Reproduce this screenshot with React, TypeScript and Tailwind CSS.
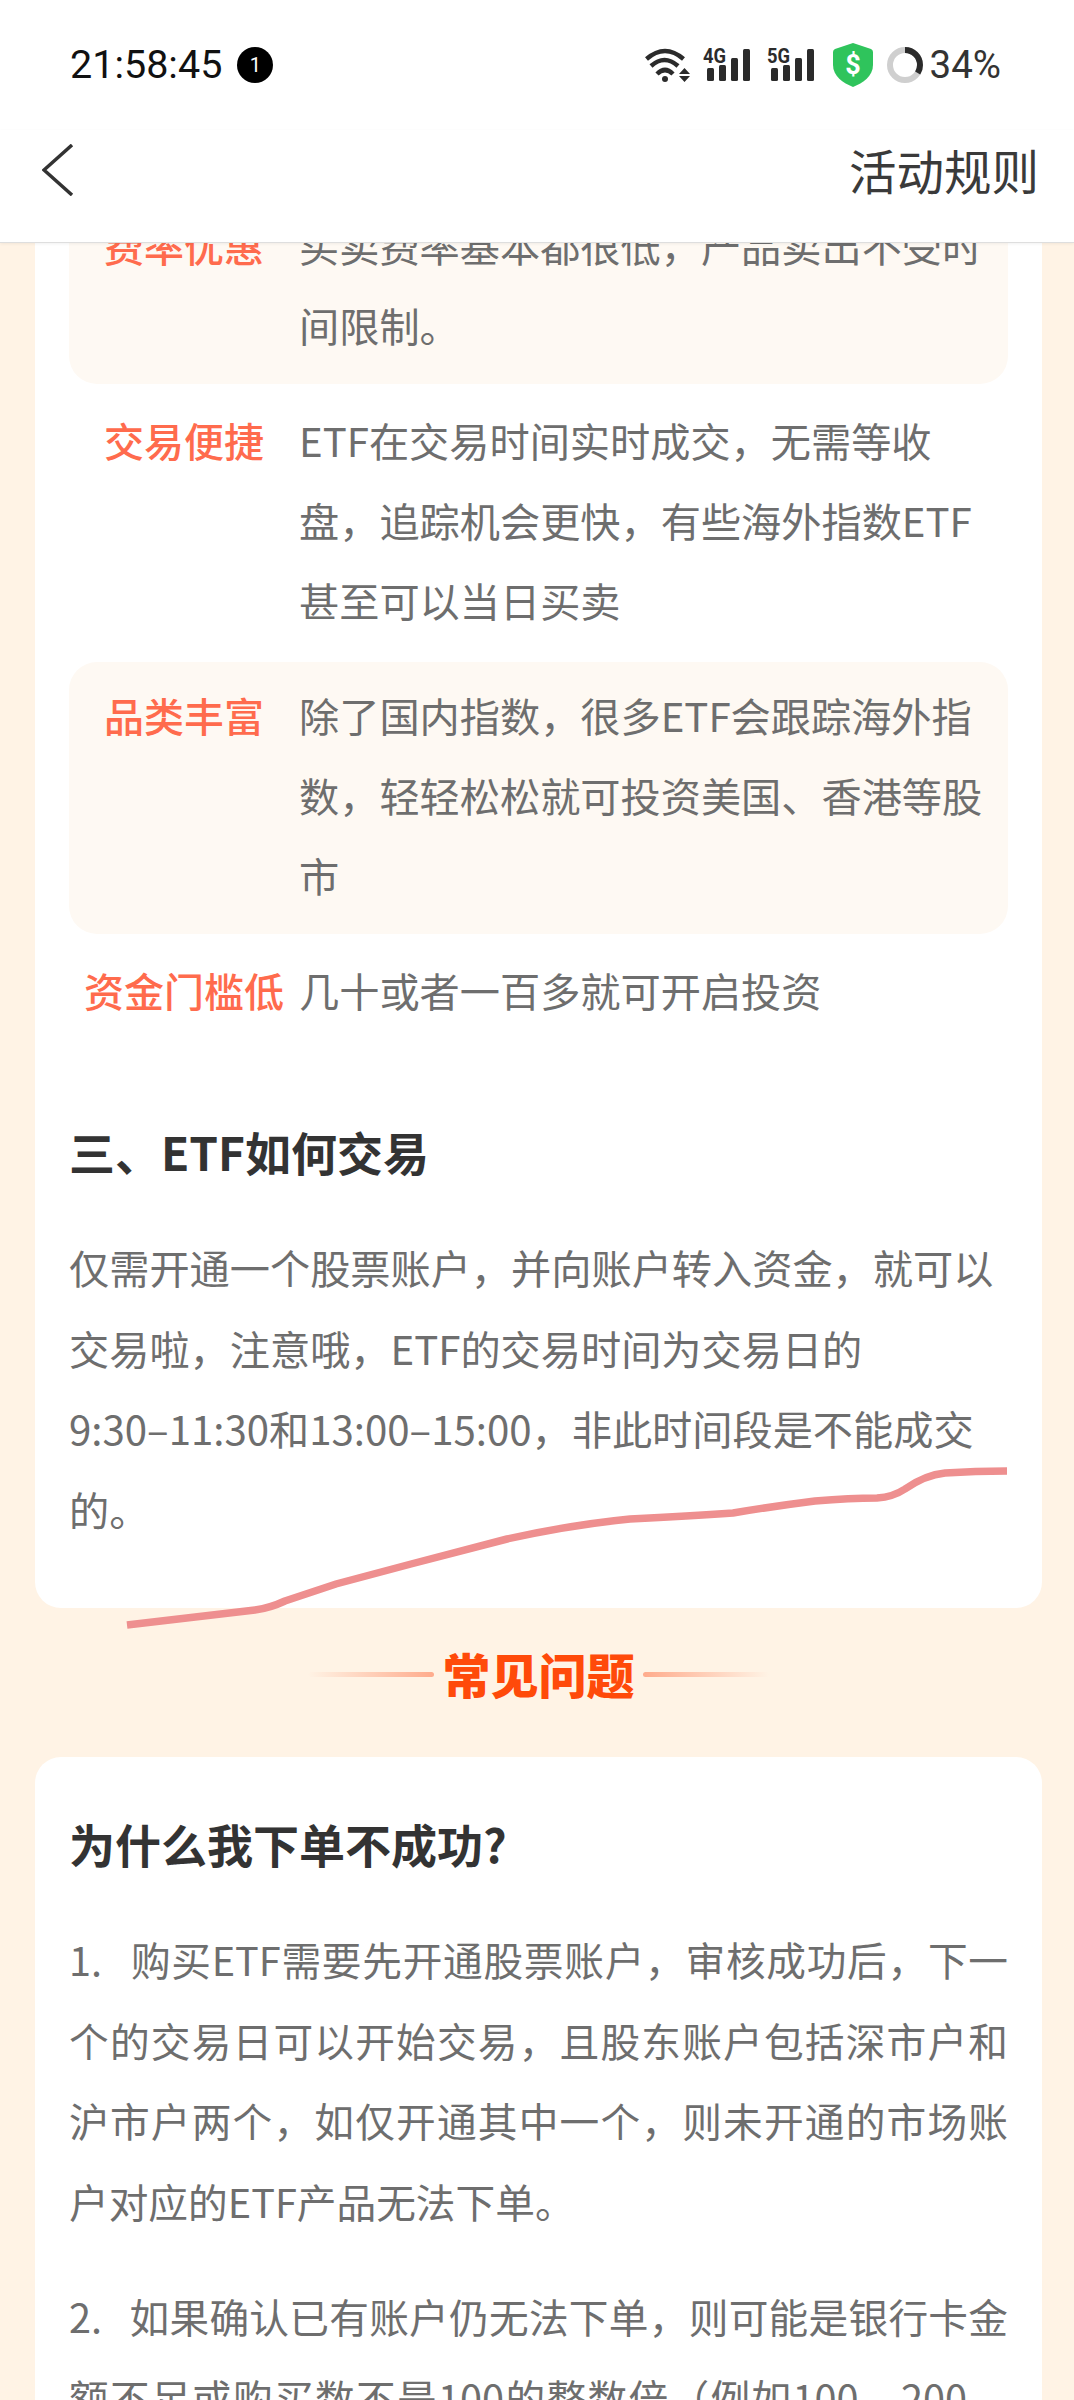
import React from 'react';

const fontStack = 'font-["Noto_Sans_CJK_SC","Noto_Sans",sans-serif]';

const benefits = [
  { label: '费率优惠', lines: ['买卖费率基本都很低，产品卖出不受时', '间限制。'], shaded: true },
  { label: '交易便捷', lines: ['ETF在交易时间实时成交，无需等收', '盘，追踪机会更快，有些海外指数ETF', '甚至可以当日买卖'], shaded: false },
  { label: '品类丰富', lines: ['除了国内指数，很多ETF会跟踪海外指', '数，轻轻松松就可投资美国、香港等股', '市'], shaded: true },
  { label: '资金门槛低', lines: ['几十或者一百多就可开启投资'], shaded: false },
];

function Lines({ lines, className }: { lines: string[]; className: string }) {
  return (
    <div className={`text-[#6e6e6e] whitespace-pre ${className}`}>
      {lines.map((line) => (
        <div key={line}>{line}</div>
      ))}
    </div>
  );
}

// FAQ answers are justified: every line but the paragraph's last fills the column
function Answer({ full, last }: { full: string[]; last?: string }) {
  return (
    <div className="text-[39.7px] leading-[80.5px] text-[#6e6e6e]">
      {full.map((line) => (
        <div key={line} className="[text-align-last:justify]">
          {line}
        </div>
      ))}
      {last && <div>{last}</div>}
    </div>
  );
}

function WifiIcon() {
  return (
    <svg width="46" height="36" viewBox="0 0 46 36" fill="none" stroke="#2b2b2b" strokeWidth="4.5">
      <path d="M1.5 12 Q20 -4 38.5 12" />
      <path d="M6 19 Q19.5 7 33 19" />
      <path d="M12 27 Q20 19 28 27" />
      <circle cx="20" cy="32" r="3" fill="#2b2b2b" stroke="none" />
      <path d="M34 27 H45 L39.5 21 Z M34 29 H45 L39.5 35 Z" fill="#2b2b2b" stroke="none" />
    </svg>
  );
}

function SignalIcon({ label }: { label: string }) {
  return (
    <svg width="47" height="42" viewBox="0 -8 47 42" fill="#2b2b2b" className="-mt-[8px]">
      <text x="0" y="15" fontSize="20" fontWeight="700" fontFamily="Roboto, sans-serif" textLength="23" lengthAdjust="spacingAndGlyphs">
        {label}
      </text>
      <rect x="4" y="20" width="7" height="13" rx="1.5" />
      <rect x="16" y="17" width="7" height="16" rx="1.5" />
      <rect x="28" y="10" width="7" height="23" rx="1.5" />
      <rect x="40" y="1" width="7" height="32" rx="1.5" />
    </svg>
  );
}

function ShieldIcon() {
  return (
    <svg width="40" height="44" viewBox="0 0 40 44">
      <path d="M20 0 L38 6 Q40 7 40 9 V22 C40 33 30 40 20 44 C10 40 0 33 0 22 V9 Q0 7 2 6 Z" fill="#2fc45c" />
      <text x="20" y="31" textAnchor="middle" fontSize="27" fontWeight="700" fontFamily="Roboto, sans-serif" fill="#fff">
        $
      </text>
    </svg>
  );
}

function BatteryRing() {
  return (
    <svg width="36" height="36" viewBox="0 0 36 36" fill="none" strokeWidth="6">
      <circle cx="18" cy="18" r="15" stroke="#cfcfcf" />
      <circle cx="18" cy="18" r="15" stroke="#2b2b2b" pathLength={100} strokeDasharray="34 100" transform="rotate(-90 18 18)" />
    </svg>
  );
}

function StatusBar() {
  return (
    <div className="flex h-[130px] items-center justify-between pl-[70px] pr-[73px]">
      <div className="flex items-center gap-[15px]">
        <span className="font-['Roboto',sans-serif] text-[39.5px] leading-none text-[#111]">21:58:45</span>
        <span className="flex h-[36px] w-[36px] items-center justify-center rounded-full bg-black font-['Roboto',sans-serif] text-[20px] text-white">
          1
        </span>
      </div>
      <div className="flex items-center">
        <WifiIcon />
        <div className="ml-[12px]">
          <SignalIcon label="4G" />
        </div>
        <div className="ml-[17px]">
          <SignalIcon label="5G" />
        </div>
        <div className="ml-[19px]">
          <ShieldIcon />
        </div>
        <div className="ml-[14px]">
          <BatteryRing />
        </div>
        <span className="ml-[7px] font-['Roboto',sans-serif] text-[38.5px] leading-none text-[#333]">34%</span>
      </div>
    </div>
  );
}

function NavBar() {
  return (
    <div className="relative z-10 flex h-[113px] shrink-0 items-start justify-between border-b border-[#dedede] pl-[42px] pr-[35px] shadow-[0_1px_3px_rgba(0,0,0,0.06)]">
      <svg width="32" height="52" viewBox="0 0 32 52" fill="none" stroke="#333" strokeWidth="3.5" className="mt-[14px]">
        <path d="M30 1 L2 26 L30 51" />
      </svg>
      <span className="mt-[12px] text-[47.5px] leading-[56px] text-[#3a3a3a]">活动规则</span>
    </div>
  );
}

function SectionTitle() {
  return (
    <div className="flex h-[149px] items-start justify-center gap-[8px] pt-[41px]">
      <div className="mt-[23px] h-[5px] w-[126px] rounded-full bg-gradient-to-r from-transparent to-[#ffab8c]" />
      <h2 className="text-[48px] font-black leading-[48px] text-[#ff4a0a]">常见问题</h2>
      <div className="mt-[23px] h-[5px] w-[126px] rounded-full bg-gradient-to-l from-transparent to-[#ffab8c]" />
    </div>
  );
}

export default function App() {
  return (
    <div className={`flex h-[2400px] w-[1074px] flex-col overflow-hidden bg-[#fff3e5] ${fontStack}`}>
      <div className="shrink-0 bg-white">
        <StatusBar />
        <NavBar />
      </div>

      <main className="min-h-0 flex-1 overflow-hidden pl-[35px] pr-[32px]">
        {/* page is scrolled, so the first row sits partly under the nav bar */}
        <div className="relative -mt-[51px] rounded-[26px] bg-white px-[34px] pb-[59px]">
          <div className="flex flex-col gap-[3px]">
            {benefits.map((item) => (
              <div key={item.label} className={`flex rounded-[28px] pb-[19px] pt-[13px] ${item.shaded ? 'bg-[#fef9f3]' : ''}`}>
                <div className="w-[230px] shrink-0 text-center text-[40px] font-medium leading-[80px] text-[#ff6b4d]">
                  {item.label}
                </div>
                <Lines lines={item.lines} className="text-[40.2px] leading-[80px]" />
              </div>
            ))}
          </div>

          <h3 className="mt-[72px] text-[46px] font-bold leading-[60px] text-[#333]">三、ETF如何交易</h3>
          <div className="mt-[46px]">
            <Lines
              className="text-[40.2px] leading-[80.5px]"
              lines={[
                '仅需开通一个股票账户，并向账户转入资金，就可以',
                '交易啦，注意哦，ETF的交易时间为交易日的',
                '9:30–11:30和13:00–15:00，非此时间段是不能成交',
                '的。',
              ]}
            />
          </div>

          {/* hand-drawn red stroke across the card's lower edge */}
          <svg
            width="1074"
            height="180"
            viewBox="0 1450 1074 180"
            fill="none"
            className="pointer-events-none absolute bottom-[-23px] left-[-35px]"
          >
            <path
              d="M127 1624 L255 1609 Q270 1607 285 1600 L336 1583 L411 1563 L507 1538 Q570 1524 630 1518 Q690 1515 733 1512 Q775 1505 815 1500 Q850 1497 877 1497 Q893 1496 905 1488 Q925 1474 945 1472 Q975 1470 1007 1470"
              stroke="#ee8f8f"
              strokeWidth="7.5"
            />
          </svg>
        </div>

        <SectionTitle />

        <div className="rounded-[26px] bg-white px-[34px] pb-[40px] pt-[56px]">
          <h3 className="text-[46px] font-bold leading-[60px] text-[#333]">为什么我下单不成功?</h3>
          <div className="mt-[46px]">
            <Answer
              full={[
                '1.\u00a0\u00a0\u00a0购买ETF需要先开通股票账户，审核成功后，下一',
                '个的交易日可以开始交易，且股东账户包括深市户和',
                '沪市户两个，如仅开通其中一个，则未开通的市场账',
              ]}
              last="户对应的ETF产品无法下单。"
            />
          </div>
          <div className="mt-[35px]">
            <Answer
              full={[
                '2.\u00a0\u00a0\u00a0如果确认已有账户仍无法下单，则可能是银行卡金',
                '额不足或购买数不是100的整数倍（例如100、200、',
              ]}
            />
          </div>
        </div>
      </main>
    </div>
  );
}
